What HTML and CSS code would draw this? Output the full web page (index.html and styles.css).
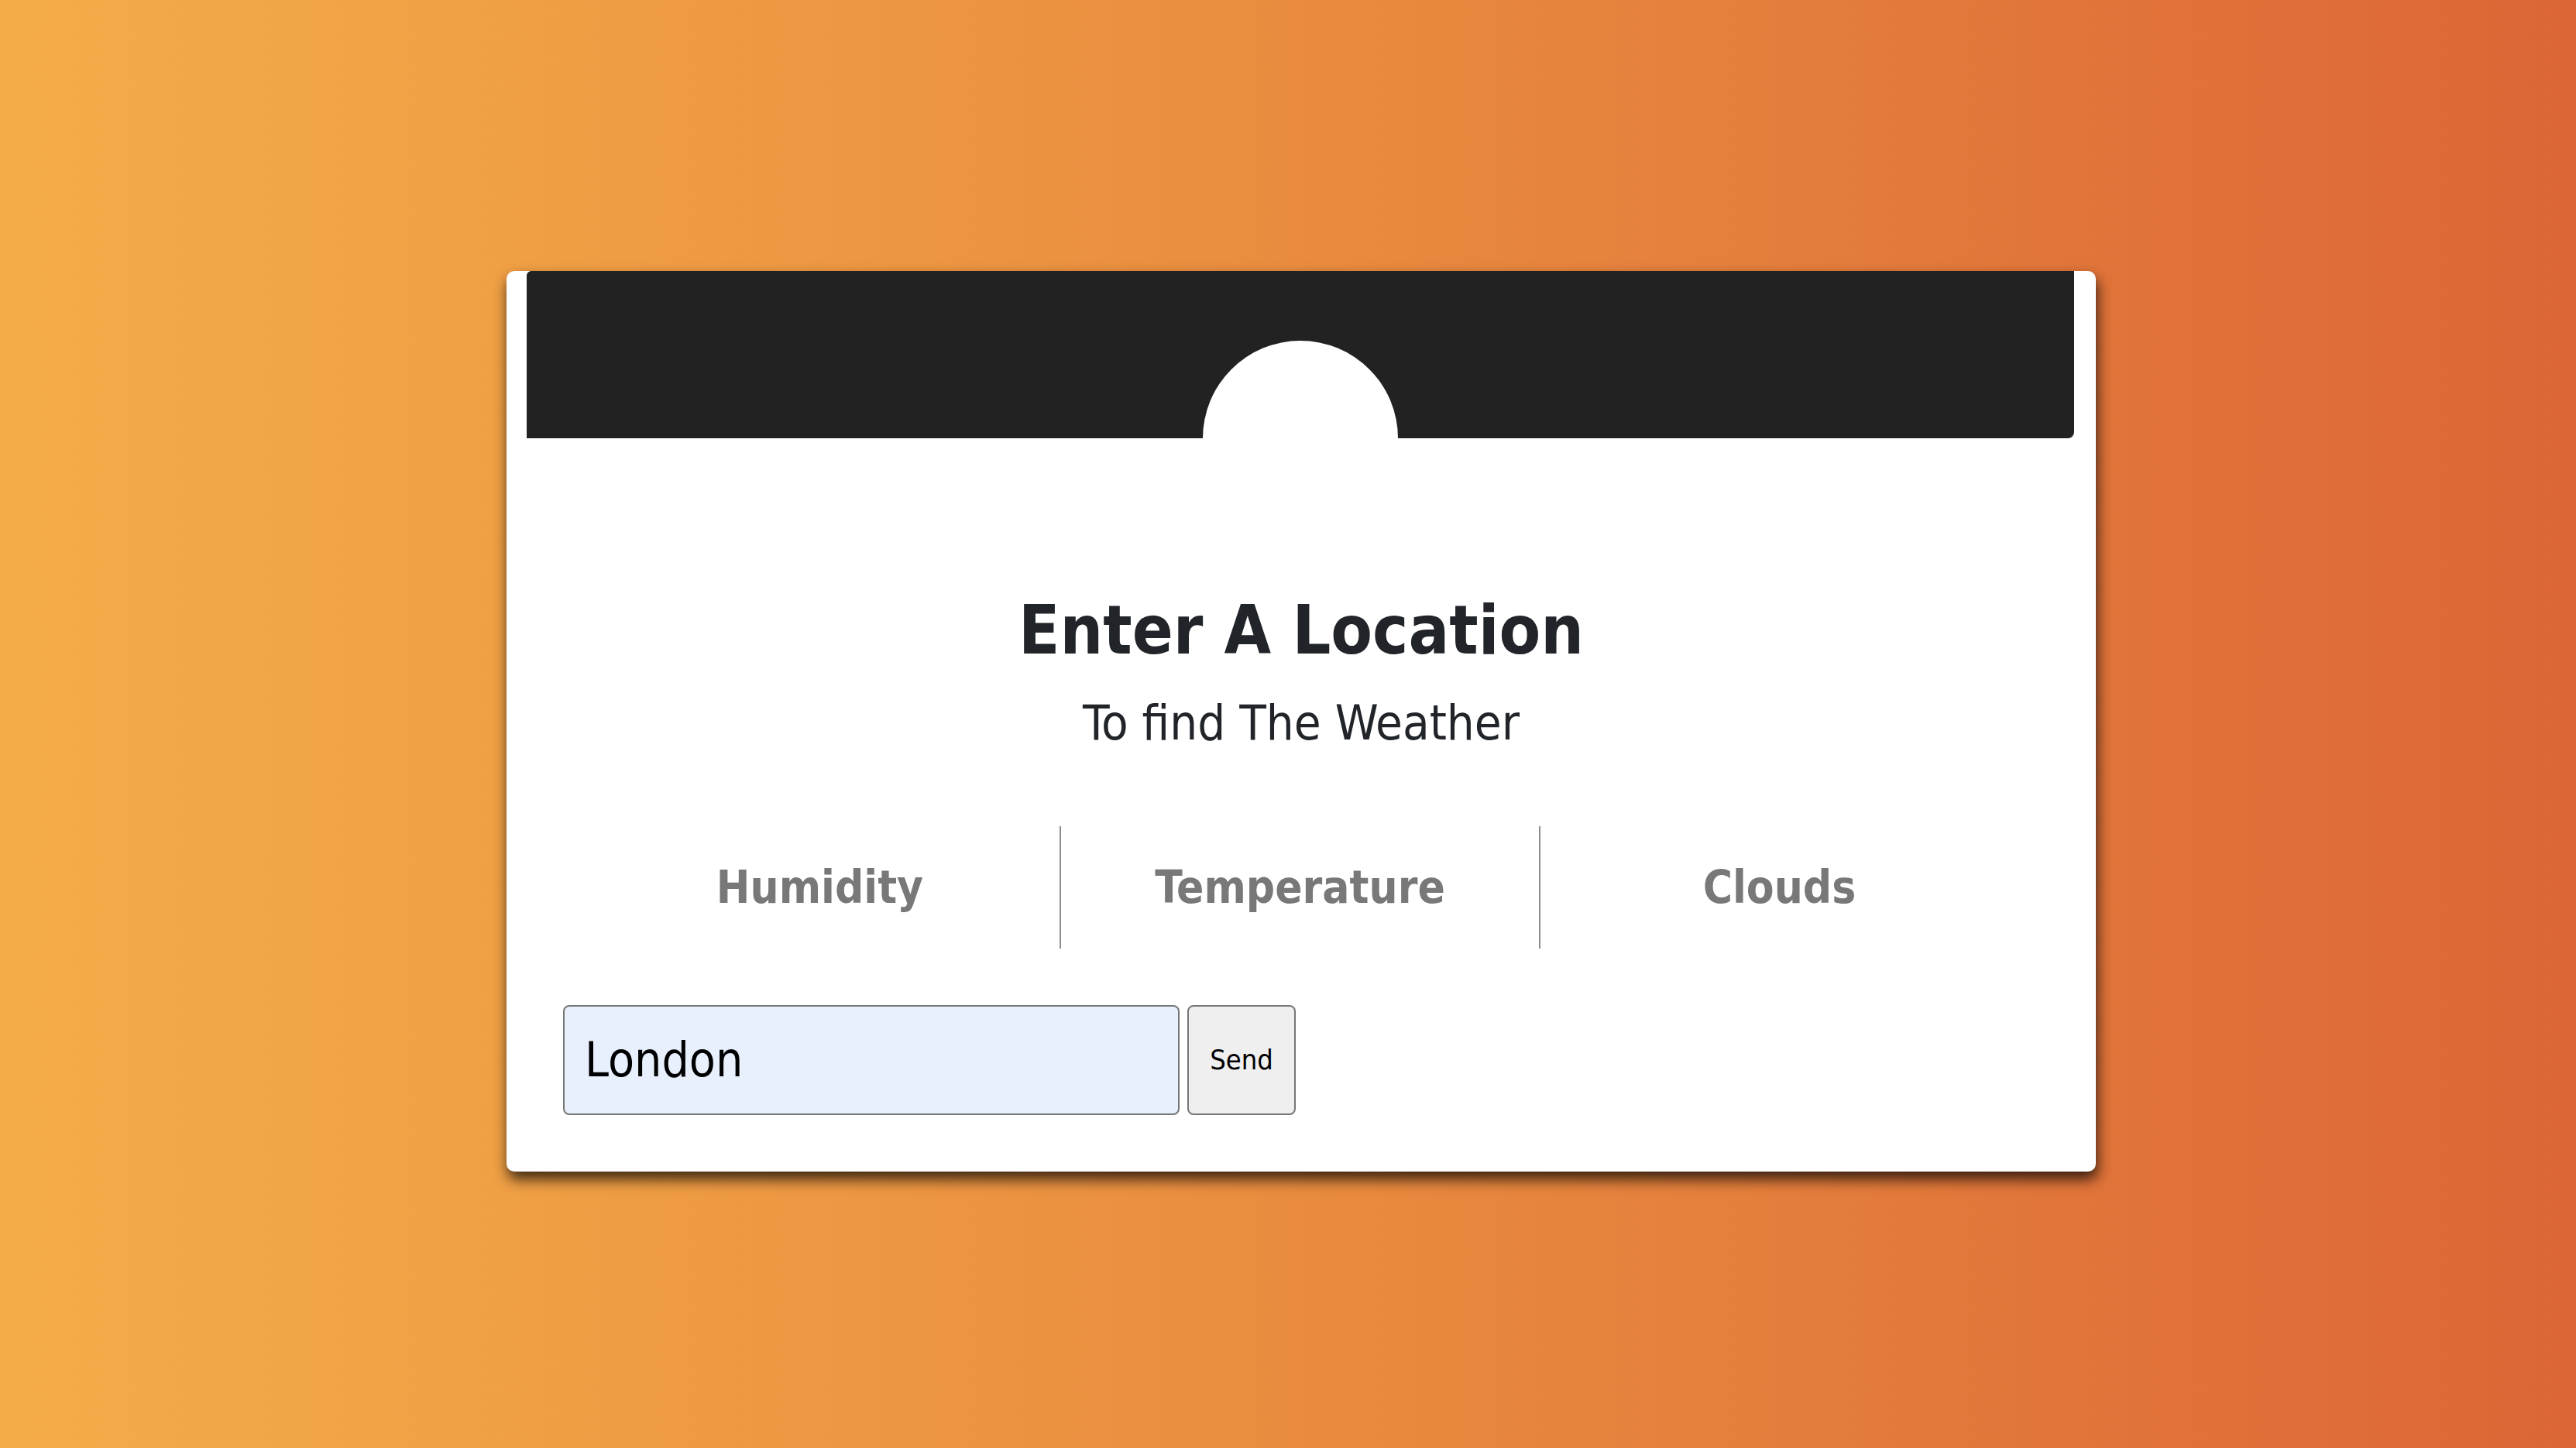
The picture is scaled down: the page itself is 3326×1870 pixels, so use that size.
FILE: index.html
```html
<!DOCTYPE html>
<html lang="en">
<head>
<meta charset="utf-8">
<title>Weather</title>
<link rel="stylesheet" href="styles.css">
</head>
<body>
  <main class="card">
    <div class="card-header">
      <div class="sun"></div>
    </div>
    <h1 class="title">Enter A Location</h1>
    <p class="subtitle">To find The Weather</p>
    <div class="stats">
      <div class="stat">Humidity</div>
      <div class="stat">Temperature</div>
      <div class="stat">Clouds</div>
    </div>
    <form class="search" onsubmit="return false">
      <input class="search-input" type="text" value="London">
      <button class="search-btn" type="submit">Send</button>
    </form>
  </main>
</body>
</html>
```

FILE: styles.css
```css
html, body {
  margin: 0;
  padding: 0;
}

body {
  width: 3326px;
  height: 1870px;
  box-sizing: border-box;
  background: linear-gradient(to right, #f4ac48 0%, #e98c3f 50%, #dc6636 100%);
  display: flex;
  justify-content: center;
  align-items: flex-start;
  padding-top: 350px;
  padding-left: 34px;
  font-family: "DejaVu Sans Condensed", "DejaVu Sans", sans-serif;
  font-stretch: condensed;
  overflow: hidden;
}

.card {
  width: 2052px;
  height: 1163px;
  box-sizing: border-box;
  background: #ffffff;
  border-radius: 10px;
  box-shadow: 2px 10px 18px rgba(0, 0, 0, 0.75);
  display: flex;
  flex-direction: column;
}

.card-header {
  height: 216px;
  margin: 0 28px 0 26px;
  background: #222222;
  border-radius: 6px 0 8px 0;
  display: flex;
  justify-content: center;
  align-items: flex-end;
}

.sun {
  width: 252px;
  height: 252px;
  border-radius: 50%;
  background: #ffffff;
  margin-bottom: -126px;
  flex: none;
}

.title {
  margin: 196px 0 0;
  font-size: 87px;
  line-height: 1.2;
  font-weight: bold;
  color: #212529;
  text-align: center;
}

.subtitle {
  margin: 30px 0 0;
  font-size: 63px;
  line-height: 1.2;
  font-weight: normal;
  color: #212529;
  text-align: center;
}

.stats {
  margin: 95px 0 0 95px;
  width: 1857px;
  height: 158px;
  display: grid;
  grid-template-columns: repeat(3, 1fr);
}

.stat {
  display: flex;
  align-items: center;
  justify-content: center;
  font-size: 58px;
  font-weight: bold;
  color: #787878;
}

.stat + .stat {
  border-left: 2px solid #8e8e8e;
}

.search {
  margin: 73px 0 0 73px;
  display: flex;
  gap: 10px;
}

.search-input {
  width: 796px;
  height: 142px;
  box-sizing: border-box;
  border: 2px solid #767676;
  border-radius: 8px;
  background: #e8f0fe;
  padding: 0 0 0 26px;
  font-family: "DejaVu Sans Condensed", "DejaVu Sans", sans-serif;
  font-stretch: condensed;
  font-size: 62px;
  color: #000000;
  outline: none;
}

.search-btn {
  width: 140px;
  height: 142px;
  box-sizing: border-box;
  border: 2px solid #767676;
  border-radius: 8px;
  background: #efefef;
  padding: 0;
  font-family: "DejaVu Sans Condensed", "DejaVu Sans", sans-serif;
  font-stretch: condensed;
  font-size: 36px;
  color: #000000;
}
```
